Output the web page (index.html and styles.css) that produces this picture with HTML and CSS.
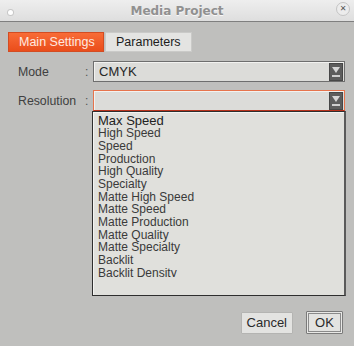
FILE: index.html
```html
<!DOCTYPE html>
<html>

<head>
    <meta charset="utf-8" />
    <title>Media Project</title>
    <link rel="stylesheet" href="styles.css">
</head>

<body>
    <div class="window">
        <div class="title-bar">
            <span class="title-dot"></span>
            <span class="title-text">Media Project</span>
            <span class="title-close">&#x2715;</span>
        </div>
        <div class="window-body">
            <div class="tab-row">
                <div class="tab tab-active">Main Settings</div>
                <div class="tab">Parameters</div>
            </div>
            <div class="form-area">
                <div class="form-row">
                    <label class="form-label">Mode</label>
                    <span class="form-colon">:</span>
                    <div class="combo">
                        <span class="combo-value">CMYK</span>
                        <svg class="combo-button" width="14" height="18" viewBox="0 0 14 18">
                            <rect x="0.5" y="0.5" width="13" height="17" fill="#5d5d5d" stroke="#474747" />
                            <polygon points="3,4 11,4 7,10" fill="#d6d6d6" />
                            <rect x="3" y="12" width="8" height="2" fill="#cfcfcf" />
                        </svg>
                    </div>
                </div>
                <div class="form-row">
                    <label class="form-label">Resolution</label>
                    <span class="form-colon">:</span>
                    <div class="combo combo-focus">
                        <span class="combo-value"></span>
                        <svg class="combo-button" width="14" height="18" viewBox="0 0 14 18">
                            <rect x="0.5" y="0.5" width="13" height="17" fill="#5d5d5d" stroke="#474747" />
                            <polygon points="3,4 11,4 7,10" fill="#d6d6d6" />
                            <rect x="3" y="12" width="8" height="2" fill="#cfcfcf" />
                        </svg>
                    </div>
                </div>
                <div class="drop-list">
                    <div class="drop-items">
                        <div class="drop-item drop-item-first">Max Speed</div>
                        <div class="drop-item">High Speed</div>
                        <div class="drop-item">Speed</div>
                        <div class="drop-item">Production</div>
                        <div class="drop-item">High Quality</div>
                        <div class="drop-item">Specialty</div>
                        <div class="drop-item">Matte High Speed</div>
                        <div class="drop-item">Matte Speed</div>
                        <div class="drop-item">Matte Production</div>
                        <div class="drop-item">Matte Quality</div>
                        <div class="drop-item">Matte Specialty</div>
                        <div class="drop-item">Backlit</div>
                        <div class="drop-item">Backlit Density</div>
                    </div>
                </div>
            </div>
            <div class="button-row">
                <button class="push-button">Cancel</button>
                <button class="push-button push-default">OK</button>
            </div>
        </div>
    </div>
</body>

</html>
```

FILE: styles.css
```css
body {
    margin: 0;
    font-family: "Liberation Sans", Arial, sans-serif;
    background-color: #bfbfbd;
}

.window {
    width: 354px;
    height: 346px;
    display: flex;
    flex-direction: column;
    background-color: #bfbfbd;
}

.title-bar {
    position: relative;
    height: 21px;
    border-bottom: 1px solid #7f7f7f;
    background: linear-gradient(#eeeeee, #dedede);
    display: flex;
    align-items: center;
    justify-content: center;
}

.title-text {
    font-family: "DejaVu Sans", sans-serif;
    font-weight: bold;
    font-size: 12px;
    color: #909090;
    text-shadow: 0 1px 0 #f8f8f8;
}

.title-dot {
    position: absolute;
    left: 8px;
    top: 10px;
    width: 5px;
    height: 5px;
    border-radius: 50%;
    background-color: #ffffff;
    box-shadow: 0 0 0 1px #c8c8c8;
}

.title-close {
    position: absolute;
    left: 336px;
    top: 2px;
    width: 12px;
    height: 12px;
    border: 1px solid #c4c4c4;
    border-radius: 50%;
    background-color: #ececec;
    color: #555555;
    font-family: "DejaVu Sans", sans-serif;
    font-size: 8px;
    font-weight: bold;
    line-height: 12px;
    text-align: center;
}

.window-body {
    flex: 1;
    display: flex;
    flex-direction: column;
    padding-top: 10px;
}

.tab-row {
    display: flex;
    gap: 1px;
    padding-left: 8px;
}

.tab {
    box-sizing: border-box;
    height: 20px;
    padding: 0 0 0 10px;
    font-size: 12.5px;
    line-height: 18px;
    white-space: nowrap;
    border: 1px solid #cacac8;
    background-color: #e4e4e2;
    color: #1c1c1c;
}

.tab-active {
    width: 96px;
    border-color: #d34c22;
    background: linear-gradient(#f86c37, #ea4d1b);
    color: #ffeae0;
}

.tab:not(.tab-active) {
    width: 87px;
}

.form-area {
    padding-top: 9px;
}

.form-row {
    display: flex;
    align-items: center;
    height: 21px;
    margin-bottom: 8px;
    padding-left: 18px;
}

.form-row:nth-child(2) {
    margin-bottom: 0;
}

.form-label {
    width: 67px;
    font-size: 12.3px;
    color: #404040;
}

.form-colon {
    width: 8px;
    font-size: 12px;
    color: #555555;
}

.combo {
    box-sizing: border-box;
    width: 252px;
    height: 21px;
    display: flex;
    align-items: center;
    justify-content: space-between;
    border: 1px solid #6e6e6e;
    box-shadow: inset 1px 1px 0 #f2f2f0;
    background-color: #dcdcd9;
    padding: 0 1px 0 5px;
}

.combo-focus {
    border-color: #e6744d;
    border-bottom-color: #b8321c;
}

.combo-value {
    font-size: 13px;
    color: #262626;
}

.drop-list {
    box-sizing: border-box;
    width: 254px;
    height: 185px;
    margin-left: 92px;
    border: 1px solid #2e2e2e;
    border-right: 2px solid #5a5a5a;
    box-shadow: inset 1px 1px 0 #f4f4f2;
    background-color: #e0e0dc;
    padding-left: 5px;
}

.drop-items {
    box-sizing: border-box;
    height: 165px;
    padding-top: 2.5px;
    overflow: hidden;
}

.drop-item {
    font-size: 12px;
    line-height: 12.68px;
    color: #3a3a3a;
    white-space: nowrap;
}

.drop-item-first {
    font-size: 13px;
    color: #222222;
}

.button-row {
    display: flex;
    justify-content: flex-end;
    align-items: center;
    gap: 13px;
    padding: 15px 11px 0 0;
}

.push-button {
    box-sizing: border-box;
    height: 22px;
    padding: 0 5px;
    font-family: "Liberation Sans", Arial, sans-serif;
    font-size: 13px;
    color: #2a2a2a;
    border: 1px solid #b4b4b2;
    border-radius: 1px;
    background-color: #e3e3e1;
}

.push-default {
    width: 37px;
    height: 23px;
    border-color: #7a7a7a;
    box-shadow: inset 0 0 0 1px #e8e8e6, inset 0 0 0 2px #8a8a8a;
}
```
